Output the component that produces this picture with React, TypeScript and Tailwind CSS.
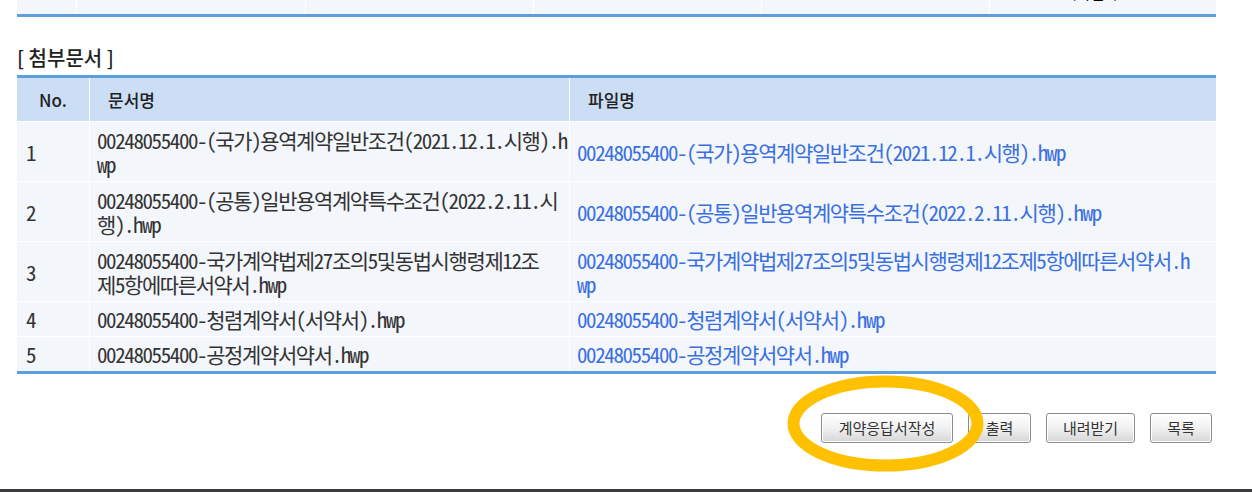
import React from 'react';

type Doc = { no: number; name: string; file: string; tall?: boolean };

const docs: Doc[] = [
  {
    no: 1,
    name: '00248055400-(국가)용역계약일반조건(2021.12.1.시행).h\nwp',
    file: '00248055400-(국가)용역계약일반조건(2021.12.1.시행).hwp',
    tall: true,
  },
  {
    no: 2,
    name: '00248055400-(공통)일반용역계약특수조건(2022.2.11.시\n행).hwp',
    file: '00248055400-(공통)일반용역계약특수조건(2022.2.11.시행).hwp',
    tall: true,
  },
  {
    no: 3,
    name: '00248055400-국가계약법제27조의5및동법시행령제12조\n제5항에따른서약서.hwp',
    file: '00248055400-국가계약법제27조의5및동법시행령제12조제5항에따른서약서.h\nwp',
    tall: true,
  },
  { no: 4, name: '00248055400-청렴계약서(서약서).hwp', file: '00248055400-청렴계약서(서약서).hwp' },
  { no: 5, name: '00248055400-공정계약서약서.hwp', file: '00248055400-공정계약서약서.hwp' },
];

const body =
  "font-['Noto_Sans_Mono_CJK_KR','Liberation_Mono','Noto_Sans_CJK_KR',monospace] text-[21px] leading-[24px] tracking-[-1.4px]";
const ui = "font-['Noto_Sans_CJK_KR','Noto_Sans',sans-serif]";

function Button({ label, width }: { label: string; width: string }) {
  return (
    <button
      type="button"
      className={`${ui} ${width} h-[30px] rounded-[3px] border border-[#8c8c8c] bg-gradient-to-b from-[#ffffff] via-[#f1f1f1] to-[#d6d6d6] text-[15px] text-[#333] shadow-[inset_0_0_0_1px_#ffffff]`}
    >
      {label}
    </button>
  );
}

export default function App() {
  return (
    <div className="relative h-[492px] w-[1252px] overflow-hidden bg-white">
      <div className="ml-[17px] w-[1199px]">
        {/* tail of the previous table */}
        <div className="grid h-[17px] grid-cols-[59px_229px_228px_228px_228px_227px] border-b-[3px] border-[#5b9fdc]">
          <div className="bg-[#f3f6fb]" />
          <div className="border-l border-white bg-[#f3f6fb]" />
          <div className="border-l border-white bg-[#f3f6fb]" />
          <div className="border-l border-white bg-[#f3f6fb]" />
          <div className="border-l border-white bg-[#f3f6fb]" />
          <div className="overflow-hidden border-l border-white bg-[#f3f6fb] pl-[73px]">
            <div className={`${ui} -mt-[17px] text-[15px] leading-[20px] text-black`}>계약일자 ▣</div>
          </div>
        </div>

        <h2 className={`${ui} mt-[29px] text-[20px] font-medium leading-[24px] text-[#222]`}>[ 첨부문서 ]</h2>

        <div className="mt-[5px] border-y-[3px] border-[#5b9fdc]">
          <div className={`${ui} grid h-[43px] grid-cols-[72px_480px_647px] items-center bg-[#cbdef5] text-[17px] font-medium text-[#222]`}>
            <div className="flex h-full items-center justify-center">No.</div>
            <div className="flex h-full items-center border-l border-white pl-[18px]">문서명</div>
            <div className="flex h-full items-center border-l border-white pl-[18px]">파일명</div>
          </div>
          {docs.map((doc) => (
            <div
              key={doc.no}
              className={`${body} grid grid-cols-[72px_480px_647px] border-t border-white bg-[#f3f6fb] text-[#333]`}
            >
              <div className={`flex items-center pl-[9px] ${doc.tall ? 'py-[5.5px]' : 'py-[5px]'}`}>{doc.no}</div>
              <div className={`whitespace-pre-line border-l border-white pl-[7px] ${doc.tall ? 'py-[5.5px]' : 'py-[5px]'}`}>
                {doc.name}
              </div>
              <div className="flex items-center border-l border-white pl-[7px]">
                <a href="#" className="whitespace-pre-line text-[#3a6fe2]">
                  {doc.file}
                </a>
              </div>
            </div>
          ))}
        </div>

        <div className="mt-[39px] flex justify-end gap-[15px] pr-[4px]">
          <Button label="계약응답서작성" width="w-[132px]" />
          <Button label="출력" width="w-[63px]" />
          <Button label="내려받기" width="w-[89px]" />
          <Button label="목록" width="w-[62px]" />
        </div>
      </div>

      <div className="absolute bottom-0 left-0 h-[3px] w-full bg-[#3c3c40]" />

      {/* highlight circle drawn over the page */}
      <svg className="absolute left-[787px] top-[375px]" width="197" height="97" viewBox="0 0 197 97">
        <ellipse cx="98.5" cy="48.5" rx="92" ry="42" fill="none" stroke="#ffc000" strokeWidth="12" />
      </svg>
    </div>
  );
}
